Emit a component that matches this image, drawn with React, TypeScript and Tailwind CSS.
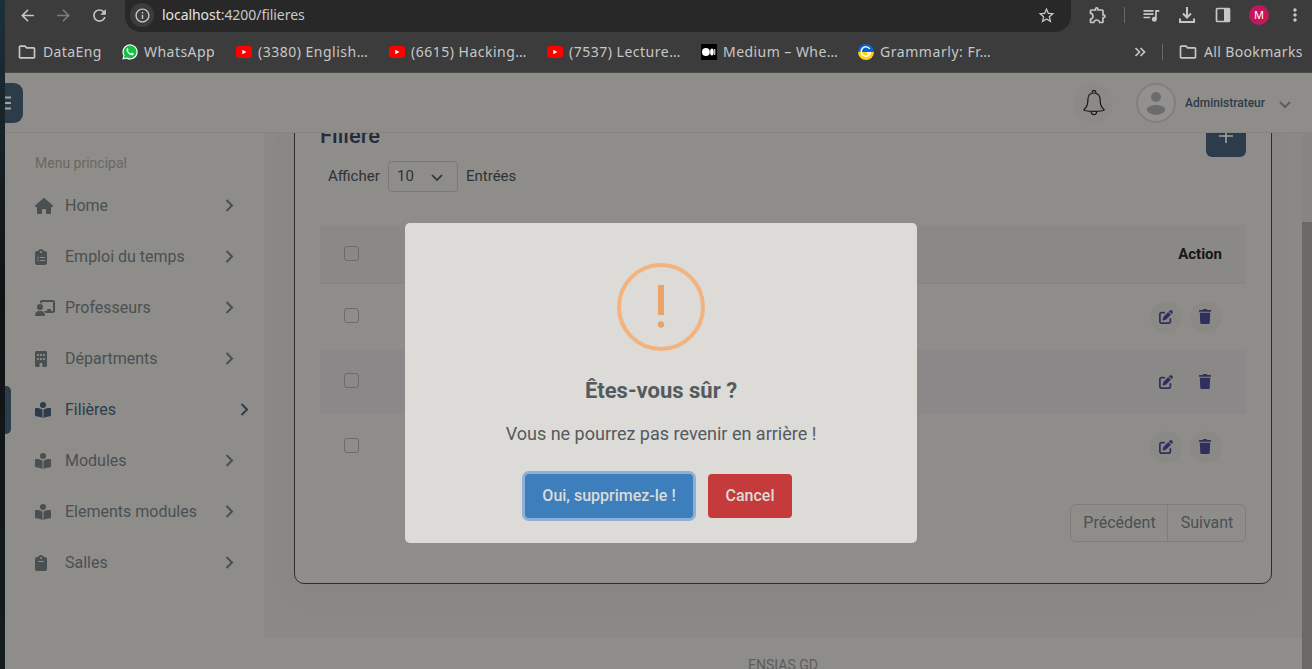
import type { ReactNode } from "react";
import {
  FaBookOpenReader,
  FaBuilding,
  FaChalkboardUser,
  FaClipboard,
  FaClipboardList,
  FaHouse,
  FaPenToSquare,
} from "react-icons/fa6";
import {
  MdArrowBack,
  MdArrowForward,
  MdInfoOutline,
  MdMoreVert,
  MdOutlineExtension,
  MdOutlineFolder,
  MdQueueMusic,
  MdRefresh,
  MdStarBorder,
} from "react-icons/md";

const YouTube = () => (
  <svg viewBox="0 0 16 16" className="size-4">
    <rect y="2" width="16" height="12" rx="3" fill="#f00" />
    <path d="M6.3 5.8v4.4L10.4 8z" fill="#fff" />
  </svg>
);

const Medium = () => (
  <svg viewBox="0 0 16 16" className="size-4">
    <rect width="16" height="16" rx="0.6" fill="#000" />
    <circle cx="4.9" cy="8" r="3.9" fill="#fff" />
    <ellipse cx="10.9" cy="8" rx="1.8" ry="3.6" fill="#fff" />
    <rect x="13" y="5" width="1.4" height="6" fill="#bbb" />
  </svg>
);

const Grammarly = () => (
  <svg viewBox="0 0 16 16" className="size-4">
    <path d="M0 8a8 8 0 0 1 16 0z" fill="#0a63d1" />
    <path d="M0 8a8 8 0 0 0 16 0z" fill="#fcd116" />
    <path d="M11.8 4.9A4.700 4.700 0 1 0 12.400 9H9" fill="none" stroke="#fff" strokeWidth="1.5" />
  </svg>
);

const WhatsApp = () => (
  <svg viewBox="0 0 17 17" className="size-4">
    <path d="M0.4 16.6 1.5 12.4A8.1 8.1 0 1 1 4.8 15.6z" fill="#fff" />
    <path d="M1.9 15.1 2.8 12A6.8 6.8 0 1 1 5.2 14.3z" fill="#12c143" />
    <path
      d="M5.7 4.6c-1 .6-1.2 1.9-.6 3.1 1 2 2.500 3.500 4.600 4.200 1.300.4 2.500-.1 2.800-1.200.1-.5 0-.6-.4-.8l-1.500-.7c-.3-.1-.5 0-.7.3l-.6.7c-1.400-.5-2.400-1.500-3-2.700l.6-.8c.1-.2.1-.4 0-.6l-.6-1.400c-.1-.2-.3-.2-.6-.1z"
      fill="#fff"
    />
  </svg>
);

const Folder = () => <MdOutlineFolder className="size-5" />;

interface Bookmark {
  icon: ReactNode;
  label: string;
  text: string;
}

const bookmarks: Bookmark[] = [
  { icon: <WhatsApp />, label: "WhatsApp", text: "w-[72px] tracking-[0.45px]" },
  { icon: <YouTube />, label: "(3380) English…", text: "w-[111px] tracking-[0.5px]" },
  { icon: <YouTube />, label: "(6615) Hacking…", text: "w-[116px] tracking-[0.5px]" },
  { icon: <YouTube />, label: "(7537) Lecture…", text: "w-[112px] tracking-[0.5px]" },
  { icon: <Medium />, label: "Medium – Whe…", text: "w-[115px] tracking-[0.45px]" },
  { icon: <Grammarly />, label: "Grammarly: Fr…", text: "w-[111px] tracking-[0.55px]" },
];

function BrowserChrome() {
  return (
    <div className="flex h-[73px] flex-none flex-col border-b border-[#4b4b4b] bg-[#3c3c3c] font-['Noto_Sans','Open_Sans',sans-serif] text-[#c7c7c7]">
      <div className="flex h-8 flex-none items-start">
        <div className="flex h-[30px] items-center pl-[13px]">
          <MdArrowBack className="size-[19px]" />
          <MdArrowForward className="ml-[17px] size-[19px] text-[#7d7d7d]" />
          <MdRefresh className="ml-[17px] size-[19px]" />
        </div>
        <div className="ml-4 flex h-8 w-[946px] items-start rounded-b-2xl bg-[#282828]">
          <div className="flex h-[30px] w-full items-center pl-[5px] pr-[15px]">
            <span className="flex size-6 items-center justify-center rounded-full bg-[#3c3c3c]">
              <MdInfoOutline className="size-[17px]" />
            </span>
            <span className="-mt-px ml-2 whitespace-nowrap text-[14px] tracking-[-0.05px] text-[#c9c9c9]">
              <span className="text-[#e3e3e3]">localhost</span>:4200/filieres
            </span>
            <MdStarBorder className="ml-auto size-[19px]" />
          </div>
        </div>
        <div className="flex h-[30px] flex-1 items-center pl-[17px] pr-[7px]">
          <MdOutlineExtension className="size-5" />
          <span className="ml-4 h-4 w-px bg-[#686868]" />
          <MdQueueMusic className="ml-4 size-5" />
          <svg viewBox="0 0 18 18" className="ml-[17px] size-[18px]" fill="none" stroke="currentColor" strokeWidth="2">
            <path d="M9 1v10M5 7.500 9 11.500 13 7.500M2 12.500V16H16V12.500" />
          </svg>
          <svg viewBox="0 0 16 16" className="ml-[19px] size-4">
            <rect x="1.500" y="1.500" width="13" height="13" rx="1" fill="none" stroke="currentColor" strokeWidth="1.700" />
            <path d="M9 1h5.500v14H9z" fill="currentColor" />
          </svg>
          <span className="ml-[18px] flex size-5 flex-none items-center justify-center rounded-full bg-[#c2185b] text-[11px] text-white">
            M
          </span>
          <MdMoreVert className="ml-auto size-5" />
        </div>
      </div>
      <div className="flex h-[39px] items-center pl-3 pr-[9px] text-[14px]">
        <Folder />
        <span className="-mt-px ml-1.5 w-[59px] whitespace-nowrap tracking-[0.4px]">DataEng</span>
        <div className="ml-5 flex gap-5">
          {bookmarks.map((b) => (
            <div key={b.label} className="flex items-center gap-1.5">
              {b.icon}
              <span className={`-mt-px whitespace-nowrap ${b.text}`}>{b.label}</span>
            </div>
          ))}
        </div>
        <svg viewBox="0 0 12 10" className="ml-auto h-2.5 w-3" fill="none" stroke="currentColor" strokeWidth="1.700">
          <path d="M1.500 1 5.500 5 1.500 9M6.500 1l4 4-4 4" />
        </svg>
        <span className="ml-4 mr-[15px] h-4 w-px bg-[#686868]" />
        <Folder />
        <span className="-mt-px ml-1.5 w-[99px] whitespace-nowrap tracking-[0.35px]">All Bookmarks</span>
      </div>
    </div>
  );
}

function TopBar() {
  return (
    <header className="flex h-[60px] flex-none items-center border-b border-[#858481] bg-[#8e8d8a]">
      <button className="flex h-10 w-[18px] items-center rounded-r-[9px] bg-[#2d3c4b]">
        <svg viewBox="0 0 6 14" className="h-3.5 w-1.5" stroke="#a3a3a0" strokeWidth="2">
          <path d="M0 1.500h6M0 7h6M0 12.500h6" />
        </svg>
      </button>
      <span className="ml-auto flex size-10 items-center justify-center rounded-full bg-[#8b8a87]">
        <svg viewBox="0 0 22 26" className="ml-px mt-px h-[26px] w-[22px]" fill="none" stroke="#18191a" strokeWidth="1.200">
          <path d="M9.300 2.800a1.800 1.800 0 1 1 3.400 0M11 3C7 3 4.900 5.800 4.900 9.500c0 5.500-1.200 8-3.700 9.700-.6.500-.4 1.100.3 1.300 5.500 1 13.500 1 19 0 .7-.2.900-.8.300-1.300-2.500-1.700-3.700-4.200-3.700-9.700C17.100 5.800 15 3 11 3zM8.200 21.300c0 4.500 5.600 4.500 5.600 0" />
        </svg>
      </span>
      <span className="ml-[23px] flex size-10 items-center justify-center rounded-full border-2 border-[#827f7c] bg-[#929190]">
        <svg viewBox="0 0 22 24" className="h-6 w-[22px]" fill="#6b6b6b">
          <circle cx="11" cy="6" r="5" />
          <path d="M1.500 18.500C4 12.500 18 12.500 20.500 18.500C18 25.500 4 25.500 1.500 18.500z" />
        </svg>
      </span>
      <span className="ml-[9px] mt-px w-[81px] text-[12px] font-medium text-[#2d3c4b]">Administrateur</span>
      <svg viewBox="0 0 12 8" className="ml-[13px] mr-[21px] mt-1 h-2 w-3" fill="none" stroke="#5f5e5b" strokeWidth="2">
        <path d="M1 1l5 5 5-5" />
      </svg>
    </header>
  );
}

const menu = [
  { label: "Home", icon: <FaHouse className="h-4 w-[18px]" /> },
  { label: "Emploi du temps", icon: <FaClipboardList className="h-4 w-3" /> },
  { label: "Professeurs", icon: <FaChalkboardUser className="h-4 w-5" /> },
  { label: "Départments", icon: <FaBuilding className="h-4 w-3" /> },
  { label: "Filières", icon: <FaBookOpenReader className="size-4" />, active: true },
  { label: "Modules", icon: <FaBookOpenReader className="size-4" /> },
  { label: "Elements modules", icon: <FaBookOpenReader className="size-4" /> },
  { label: "Salles", icon: <FaClipboard className="h-4 w-3" /> },
];

function Sidebar() {
  return (
    <nav className="w-[259px] flex-none bg-[#8e8d8a] pt-5">
      <h2 className="pl-[30px] text-[14px] leading-5 text-[#696863]">Menu principal</h2>
      <ul className="mt-[7px]">
        {menu.map((m) => (
          <li
            key={m.label}
            className={`flex h-[51px] items-center ${m.active ? "pr-[15px] text-[#2d3c4b]" : "pr-[30px] text-[#4a5052]"}`}
          >
            <span className={`h-12 w-1.5 flex-none rounded-r-[5px] ${m.active ? "bg-[#2d3c4b]" : ""}`} />
            <span className="ml-6 w-[30px] flex-none">{m.icon}</span>
            <span className="text-[16px]">{m.label}</span>
            <svg viewBox="0 0 9 13" className="ml-auto h-[13px] w-[9px]" fill="none" stroke="currentColor" strokeWidth="2">
              <path d="M1.500 1 7 6.500 1.500 12" />
            </svg>
          </li>
        ))}
      </ul>
    </nav>
  );
}

const Checkbox = () => <span className="size-[15px] rounded-[3px] border border-[#6c6b69]" />;

function ActionIcons() {
  return (
    <div className="ml-auto flex gap-2 text-[#30305e]">
      <span className="flex size-8 items-center justify-center rounded-full bg-[#8a8986]">
        <FaPenToSquare className="size-3.5" />
      </span>
      <span className="flex size-8 items-center justify-center rounded-full bg-[#8a8986]">
        <svg viewBox="0 0 12 15" className="-ml-0.5 h-[15px] w-3" fill="currentColor">
          <path d="M0 1h4V0h4v1h4v1.700H0zM.8 3.700h10.400L10.700 14q-.1 1-1 1H2.300q-.9 0-1-1z" />
        </svg>
      </span>
    </div>
  );
}

function FilierePanel() {
  return (
    <section className="-mt-[29px] flex h-[480px] flex-col rounded-[10px] border border-[#2d2d2d] bg-[#8e8d8a] px-[25px] shadow-[0_10px_30px_rgba(90,90,110,0.06)]">
      <div className="mt-[9px] flex h-[43px] flex-none items-end justify-between">
        <h1 className="mb-2 text-[22px] font-medium leading-[26px] text-[#252c3c]">Filière</h1>
        <button className="flex size-10 items-center justify-center rounded-md bg-[#2d3c4b]">
          <svg viewBox="0 0 14 14" className="-mt-0.5 size-3.5" stroke="#a3a3a0" strokeWidth="1.600">
            <path d="M7 0v14M0 7h14" />
          </svg>
        </button>
      </div>
      <div className="mt-1 flex h-[31px] flex-none items-center pl-2 text-[15px] text-[#2e3234]">
        <span className="w-[60px]">Afficher</span>
        <span className="mr-2 flex h-[31px] w-[70px] items-center justify-between rounded border border-[#7a7976] pl-2 pr-3.5">
          10
          <svg viewBox="0 0 12 8" className="mt-0.5 h-2 w-3" fill="none" stroke="currentColor" strokeWidth="1.700">
            <path d="M1 1l5 5 5-5" />
          </svg>
        </span>
        <span>Entrées</span>
      </div>
      <div className="mt-[33px] flex h-[59px] flex-none items-center border-b border-[#858481] bg-[#8a8986] px-6">
        <span className="-mt-0.5 flex">
          <Checkbox />
        </span>
        <span className="ml-auto mt-px text-[15px] font-bold text-[#151617]">Action</span>
      </div>
      {[0, 1, 2].map((row) => (
        <div
          key={row}
          className={`flex h-[65px] flex-none items-center pl-6 pr-6 ${row === 1 ? "bg-[#8b888a]" : ""}`}
        >
          <span className="-mt-0.5 flex">
            <Checkbox />
          </span>
          <ActionIcons />
        </div>
      ))}
      <div className="ml-auto mt-[25px] flex h-[38px] w-[176px] flex-none rounded-md border border-[#7f7e7b] text-[16px] text-[#4a5052]">
        <span className="flex w-[97px] items-center justify-center border-r border-[#7f7e7b] pl-px">Précédent</span>
        <span className="flex flex-1 items-center justify-center pl-px">Suivant</span>
      </div>
    </section>
  );
}

function ConfirmDialog() {
  return (
    <div className="absolute left-[405px] top-[223px] flex h-[320px] w-[512px] flex-col items-center rounded-[5px] bg-[#dcdbd7] text-[#545a5e]">
      <svg viewBox="0 0 88 88" className="mt-10 size-[88px]">
        <circle cx="44" cy="44" r="42" fill="none" stroke="#f4b27c" strokeWidth="4" />
        <rect x="41" y="22" width="6" height="30" fill="#eba266" />
        <circle cx="44" cy="61.500" r="3.200" fill="#eba266" />
      </svg>
      <h2 className="mt-[25px] text-[22px] font-bold leading-[30px]">Êtes-vous sûr ?</h2>
      <p className="mt-[15px] text-[18px] leading-[26px]">Vous ne pourrez pas revenir en arrière !</p>
      <div className="mt-[27px] flex gap-[15px] pr-[5px] text-[16px] font-medium text-[#dcdbd7]">
        <button className="h-11 w-[168px] whitespace-nowrap rounded bg-[#3d7fbd] shadow-[0_0_0_3px_#8fafd4]">
          Oui, supprimez-le !
        </button>
        <button className="h-11 w-[84px] rounded bg-[#c53b3c]">Cancel</button>
      </div>
    </div>
  );
}

export default function App() {
  return (
    <div className="relative flex h-[669px] w-[1312px] overflow-hidden bg-[#8e8d8a] font-[Roboto,sans-serif]">
      <div className="w-[5px] flex-none bg-linear-to-b from-[#1c3039] from-0% via-[#101213] via-45% to-[#141d20] to-100%" />
      <div className="flex min-w-0 flex-1 flex-col">
        <BrowserChrome />
        <TopBar />
        <div className="flex min-h-0 flex-1">
          <Sidebar />
          <main className="min-w-0 flex-1 overflow-hidden bg-[#8a8986]">
            <div className="h-[505px] overflow-hidden px-[30px]">
              <FilierePanel />
            </div>
            <footer className="h-10 bg-[#8e8d8a] pt-[18px] text-center text-[14px] leading-[18px] text-[#5c5e5d]">
              ENSIAS GD
            </footer>
          </main>
          <div className="w-2.5 flex-none bg-[#868583] pt-[89px]">
            <div className="h-full bg-[#6c6865]" />
          </div>
        </div>
      </div>
      <ConfirmDialog />
    </div>
  );
}
